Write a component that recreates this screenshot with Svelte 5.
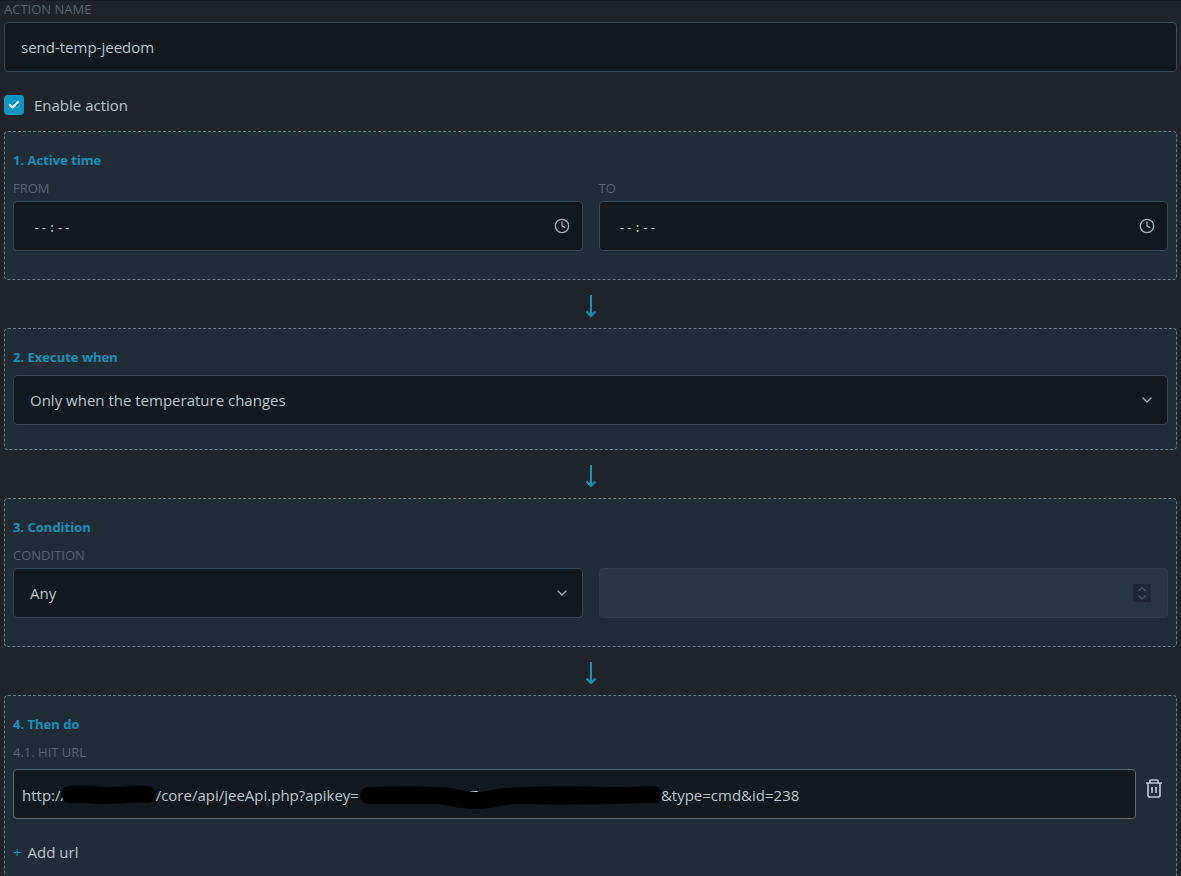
<script>
	let name = 'send-temp-jeedom';
	let enabled = true;
	let from = '';
	let to = '';
	let trigger = 'change';
	let condition = 'any';
	let threshold = '';

	const gap = (count) => '\u00a0'.repeat(count);

	// host and api key are blanked out, only the rest of the url is readable
	let urls = [
		`http://${gap(23)}/core/api/jeeApi.php?apikey=${gap(26)}RT${gap(47)}&type=cmd&id=238`
	];

	const addUrl = () => {
		urls = [...urls, ''];
	};

	const removeUrl = (index) => {
		urls = urls.filter((_, i) => i !== index);
	};
</script>

{#snippet arrow()}
	<div class="arrow">
		<svg width="12" height="24" viewBox="0 0 12 24" aria-hidden="true">
			<path d="M6 1v21M1.5 17.5L6 22l4.5-4.5" fill="none" stroke="currentColor" stroke-width="2" />
		</svg>
	</div>
{/snippet}

{#snippet chevron()}
	<svg class="field-icon" width="16" height="16" viewBox="0 0 24 24" aria-hidden="true">
		<path d="M6 9l6 6 6-6" fill="none" stroke="currentColor" stroke-width="2" stroke-linecap="round" stroke-linejoin="round" />
	</svg>
{/snippet}

{#snippet clock()}
	<svg class="field-icon" width="16" height="16" viewBox="0 0 24 24" aria-hidden="true">
		<g fill="none" stroke="currentColor" stroke-width="2" stroke-linecap="round" stroke-linejoin="round">
			<circle cx="12" cy="12" r="10" />
			<path d="M12 6v6l4 2" />
		</g>
	</svg>
{/snippet}

<main>
	<label class="caption" for="name">Action name</label>
	<input class="field" id="name" type="text" bind:value={name}>

	<label class="enable">
		<input type="checkbox" bind:checked={enabled}>
		Enable action
	</label>

	<section class="card">
		<h2>1. Active time</h2>
		<div class="row">
			<div>
				<label class="caption" for="from">From</label>
				<div class="control">
					<input class="field time" id="from" type="time" bind:value={from}>
					{@render clock()}
				</div>
			</div>
			<div>
				<label class="caption" for="to">To</label>
				<div class="control">
					<input class="field time" id="to" type="time" bind:value={to}>
					{@render clock()}
				</div>
			</div>
		</div>
	</section>

	{@render arrow()}

	<section class="card">
		<h2>2. Execute when</h2>
		<div class="control">
			<select class="field" aria-label="Execute when" bind:value={trigger}>
				<option value="change">Only when the temperature changes</option>
			</select>
			{@render chevron()}
		</div>
	</section>

	{@render arrow()}

	<section class="card">
		<h2>3. Condition</h2>
		<div class="row">
			<div>
				<label class="caption" for="condition">Condition</label>
				<div class="control">
					<select class="field" id="condition" bind:value={condition}>
						<option value="any">Any</option>
					</select>
					{@render chevron()}
				</div>
			</div>
			<div class="control">
				<input class="field" type="number" aria-label="Temperature" disabled={condition === 'any'} bind:value={threshold}>
				<svg class="stepper" width="18" height="18" viewBox="0 0 18 18" aria-hidden="true">
					<path d="M0 0h18v18H0z" fill="#1f2733" />
					<path d="M5.5 7L9 3.5 12.5 7M5.5 11.5L9 15l3.5-3.5" fill="none" stroke="#46525e" stroke-width="1.5" />
				</svg>
			</div>
		</div>
	</section>

	{@render arrow()}

	<section class="card">
		<h2>4. Then do</h2>
		{#each urls as url, i}
			<label class="caption url-caption" for="url-{i}">4.{i + 1}. Hit url</label>
			<div class="url">
				<div class="control">
					<input class="field" id="url-{i}" type="text" bind:value={urls[i]}>
					{#if i === 0}
						<svg class="marker" width="660" height="50" viewBox="0 0 660 50" aria-hidden="true">
							<path d="M57 17C69 15 82 18 96 18s23-2 37-1c8 0 11 5 10 10-1 6-4 7-10 7-20-1-41 3-59 0-10 0-20 2-24-4-4-7 0-13 7-13z" />
							<path d="M356 18c30-1 58-1 80 1 12 2 22 4 30 4s16-4 28-4c30-2 70-2 98-1 17 0 37 0 47-1 7 0 10 4 10 9 0 6-4 9-11 8-33 1-91 2-128 1-17-1-23 4-46 5-20 0-25-4-42-5-26 0-46 0-64 0-7 0-11-3-11-8s3-9 9-9z" />
						</svg>
					{/if}
				</div>
				<button class="remove" type="button" aria-label="Remove url" on:click={() => removeUrl(i)}>
					<svg width="18" height="20" viewBox="0 0 18 20" aria-hidden="true">
						<g fill="none" stroke="currentColor" stroke-width="1.7">
							<path d="M1 5h16M5 5V3q0-1 1-1h6q1 0 1 1v2M3 5v12q0 2 2 2h8q2 0 2-2V5" />
							<path d="M7 9v6M11 9v6" />
						</g>
					</svg>
				</button>
			</div>
		{/each}
		<button class="add" type="button" on:click={addUrl}><span>+</span>Add url</button>
	</section>
</main>

<style>
	:global(body) {
		background: #1e2429;
	}

	main {
		box-sizing: border-box;
		height: 100vh;
		padding: 0 4px 24px;
		overflow-y: auto;
		scrollbar-width: none;
		border-top: 1px solid #151d23;
		color: #bbc6ce;
		font: 15px/24px "Segoe UI", "Open Sans", "Noto Sans", sans-serif;
	}

	.caption {
		display: block;
		height: 21px;
		color: #56646e;
		font-size: 13px;
		line-height: 16px;
		text-transform: uppercase;
	}

	.field {
		display: block;
		box-sizing: border-box;
		width: 100%;
		height: 50px;
		margin: 0;
		padding: 0 16px;
		border: 1px solid #374956;
		border-radius: 4px;
		outline: 0;
		background: #11191f;
		color: #bbc6ce;
		font: inherit;
		appearance: none;
	}

	.field:disabled {
		border-color: #303d48;
		background: #283640;
	}

	.time {
		padding: 6px 18px 0;
		font: 12px/24px "Liberation Mono", monospace;
	}

	.time::-webkit-datetime-edit-ampm-field {
		display: none;
	}

	.time::-webkit-calendar-picker-indicator {
		opacity: 0;
	}

	.control {
		position: relative;
		align-self: end;
	}

	.field-icon {
		position: absolute;
		top: 17px;
		right: 13px;
		color: #a2afb9;
		pointer-events: none;
	}

	.stepper {
		position: absolute;
		top: 16px;
		right: 17px;
	}

	.enable {
		display: flex;
		align-items: center;
		gap: 10px;
		margin: 21px 0 14px;
	}

	.enable input {
		width: 20px;
		height: 20px;
		margin: 0;
		border-radius: 4px;
		background: #1095c1 url("data:image/svg+xml,%3Csvg xmlns='http://www.w3.org/2000/svg' viewBox='0 0 24 24' fill='none' stroke='white' stroke-width='4' stroke-linecap='round' stroke-linejoin='round'%3E%3Cpath d='M20 6L9 17l-5-5'/%3E%3C/svg%3E") center / 12px no-repeat;
		appearance: none;
	}

	.enable input:not(:checked) {
		background: #11191f;
	}

	.card {
		padding: 18px 8px 24px;
		border: 1px dashed #6f7f89;
		border-radius: 4px;
		background: #202d37;
	}

	h2 {
		margin: 0 0 8px;
		color: #1a8fbb;
		font-size: 13px;
		font-weight: 700;
		line-height: 20px;
	}

	.row {
		display: grid;
		grid-template-columns: 1fr 1fr;
		gap: 16px;
		margin: 10px 0 4px;
	}

	.arrow {
		height: 34px;
		padding-top: 14px;
		color: #1095c1;
		text-align: center;
		line-height: 0;
	}

	.url-caption {
		height: 27px;
		line-height: 20px;
	}

	.url {
		display: grid;
		grid-template-columns: 1fr 32px;
		margin-bottom: 21px;
	}

	.url .field {
		padding: 2px 8px 0;
		border-color: #5d6b76;
	}

	.marker {
		position: absolute;
		top: 0;
		left: 0;
		pointer-events: none;
	}

	button {
		padding: 0;
		border: 0;
		background: none;
		color: inherit;
		font: inherit;
		cursor: pointer;
	}

	.remove {
		height: 38px;
		padding-left: 4px;
		line-height: 0;
	}

	.add {
		display: flex;
		gap: 6px;
	}

	.add span {
		color: #1095c1;
	}
</style>
